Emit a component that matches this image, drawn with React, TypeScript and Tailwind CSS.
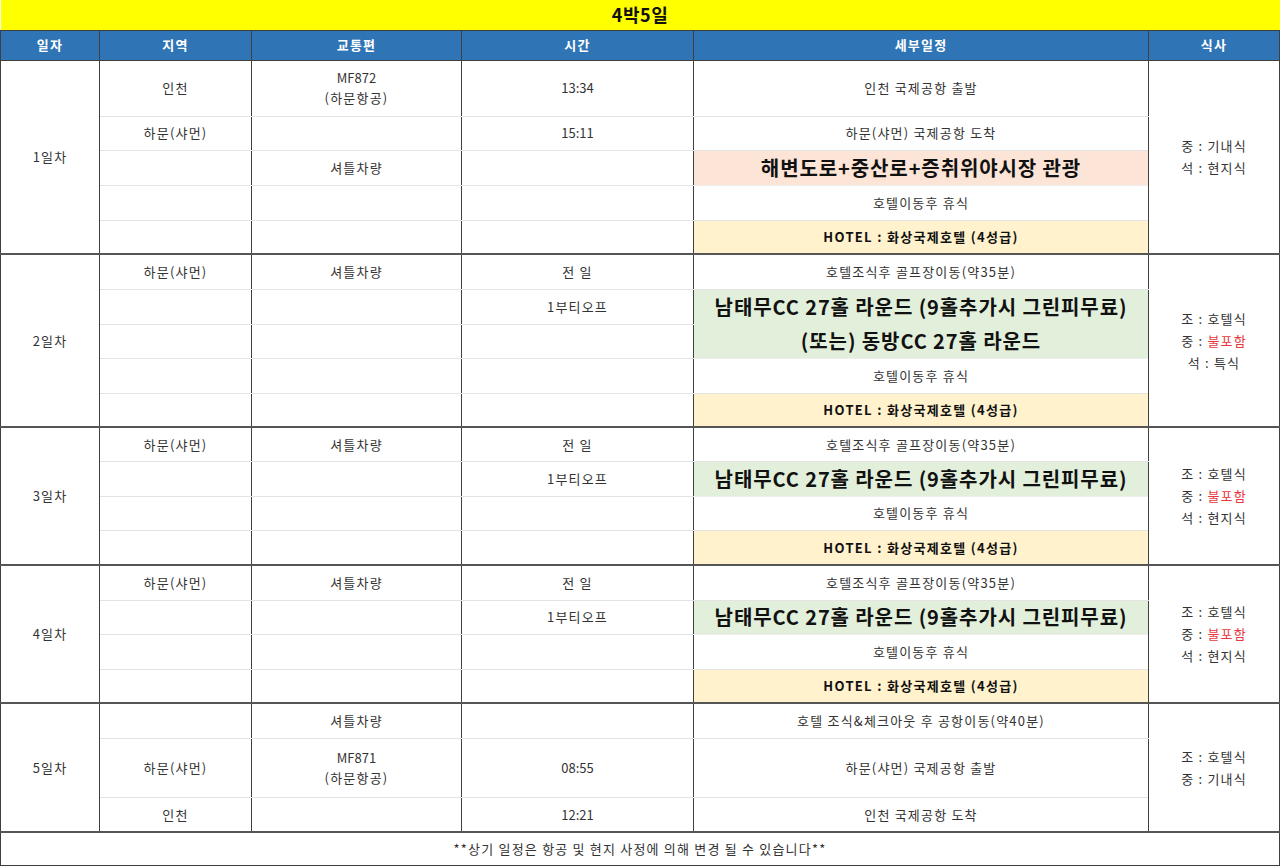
import type { ReactNode } from 'react'

type Tone = 'plain' | 'salmon' | 'green' | 'hotel'

type Row = {
  h: number
  region?: string
  transport?: ReactNode
  time?: string
  detail?: ReactNode
  tone?: Tone
  big?: boolean
  joinNext?: boolean
}

type Day = {
  label: string
  meals: [string, string][]
  rows: Row[]
}

const flight = (no: string) => (
  <div className="leading-[20px]">
    <span className="tracking-normal">{no}</span>
    <br />
    (하문항공)
  </div>
)

const hotel: Row = { h: 34, detail: 'HOTEL : 화상국제호텔 (4성급)', tone: 'hotel' }
const rest: Row = { h: 35, detail: '호텔이동후 휴식' }
const golf = '남태무CC 27홀 라운드 (9홀추가시 그린피무료)'

const days: Day[] = [
  {
    label: '1일차',
    meals: [['중', '기내식'], ['석', '현지식']],
    rows: [
      { h: 56, region: '인천', transport: flight('MF872'), time: '13:34', detail: '인천 국제공항 출발' },
      { h: 34, region: '하문(샤먼)', time: '15:11', detail: '하문(샤먼) 국제공항 도착' },
      { h: 35, transport: '셔틀차량', detail: '해변도로+중산로+증취위야시장 관광', tone: 'salmon', big: true },
      rest,
      hotel,
    ],
  },
  {
    label: '2일차',
    meals: [['조', '호텔식'], ['중', '불포함'], ['석', '특식']],
    rows: [
      { h: 35, region: '하문(샤먼)', transport: '셔틀차량', time: '전 일', detail: '호텔조식후 골프장이동(약35분)' },
      { h: 35, time: '1부티오프', detail: golf, tone: 'green', big: true, joinNext: true },
      { h: 34, detail: '(또는) 동방CC 27홀 라운드', tone: 'green', big: true },
      rest,
      hotel,
    ],
  },
  {
    label: '3일차',
    meals: [['조', '호텔식'], ['중', '불포함'], ['석', '현지식']],
    rows: [
      { h: 34, region: '하문(샤먼)', transport: '셔틀차량', time: '전 일', detail: '호텔조식후 골프장이동(약35분)' },
      { h: 35, time: '1부티오프', detail: golf, tone: 'green', big: true },
      { h: 34, detail: '호텔이동후 휴식' },
      { h: 35, detail: 'HOTEL : 화상국제호텔 (4성급)', tone: 'hotel' },
    ],
  },
  {
    label: '4일차',
    meals: [['조', '호텔식'], ['중', '불포함'], ['석', '현지식']],
    rows: [
      { h: 35, region: '하문(샤먼)', transport: '셔틀차량', time: '전 일', detail: '호텔조식후 골프장이동(약35분)' },
      { h: 34, time: '1부티오프', detail: golf, tone: 'green', big: true },
      { h: 35, detail: '호텔이동후 휴식' },
      { h: 34, detail: 'HOTEL : 화상국제호텔 (4성급)', tone: 'hotel' },
    ],
  },
  {
    label: '5일차',
    meals: [['조', '호텔식'], ['중', '기내식']],
    rows: [
      { h: 35, transport: '셔틀차량', detail: '호텔 조식&체크아웃 후 공항이동(약40분)' },
      { h: 59, region: '하문(샤먼)', transport: flight('MF871'), time: '08:55', detail: '하문(샤먼) 국제공항 출발' },
      { h: 35, region: '인천', time: '12:21', detail: '인천 국제공항 도착' },
    ],
  },
]

const toneBg: Record<Tone, string> = {
  plain: 'bg-white',
  salmon: 'bg-[#fce4d6]',
  green: 'bg-[#e2efda]',
  hotel: 'bg-[#fff2cc]',
}

const cell = 'border-x border-x-[#3f3f3f] text-center align-middle p-0'

function DayBlock({ day }: { day: Day }) {
  return (
    <>
      {day.rows.map((r, i) => {
        const last = i === day.rows.length - 1
        const line = last ? 'border-b-2 border-b-[#555]' : 'border-b border-b-[#e3e3e3]'
        const tone = r.tone ?? 'plain'
        return (
          <tr key={i} style={{ height: r.h }}>
            {i === 0 && (
              <td rowSpan={day.rows.length} className={`${cell} border-b-2 border-b-[#555]`}>
                {day.label}
              </td>
            )}
            <td className={`${cell} ${line}`}>{r.region}</td>
            <td className={`${cell} ${line}`}>{r.transport}</td>
            <td className={`${cell} ${line} ${/\d:\d/.test(r.time ?? '') ? 'tracking-normal' : ''}`}>{r.time}</td>
            <td
              className={`${cell} ${toneBg[tone]} ${
                r.joinNext ? 'border-b-0' : tone !== 'plain' && !last ? 'border-b border-b-[#eeeeee]' : line
              } ${r.big ? 'text-[20px] font-bold text-[#111] tracking-[0.9px]' : ''} ${
                tone === 'hotel' ? 'font-bold text-[#111] tracking-[1.3px]' : ''
              }`}
            >
              {r.detail}
            </td>
            {i === 0 && (
              <td rowSpan={day.rows.length} className={`${cell} border-b-2 border-b-[#555] leading-[22px]`}>
                {day.meals.map(([k, v]) => (
                  <div key={k}>
                    {k} : <span className={v === '불포함' ? 'text-[#e8383d]' : ''}>{v}</span>
                  </div>
                ))}
              </td>
            )}
          </tr>
        )
      })}
    </>
  )
}

export default function App() {
  return (
    <div className="w-[1280px] h-[868px] bg-white font-['Noto_Sans_CJK_KR',sans-serif] text-[13px] text-[#333] tracking-[1.2px]">
      <table className="w-[1279px] table-fixed border-collapse">
        <colgroup>
          <col className="w-[99px]" />
          <col className="w-[152px]" />
          <col className="w-[210px]" />
          <col className="w-[232px]" />
          <col className="w-[455px]" />
          <col className="w-[131px]" />
        </colgroup>
        <thead>
          <tr className="h-[30px]">
            <th colSpan={6} className="bg-[#ffff00] border-b border-b-[#3f3f3f] text-[18px] font-bold text-[#111] tracking-[0.5px] p-0">
              4박5일
            </th>
          </tr>
          <tr className="h-[30px] bg-[#2f75b5] text-white">
            {['일자', '지역', '교통편', '시간', '세부일정', '식사'].map((h) => (
              <th key={h} className="border border-[#3f3f3f] font-bold text-[13px] p-0">
                {h}
              </th>
            ))}
          </tr>
        </thead>
        <tbody>
          {days.map((d) => (
            <DayBlock key={d.label} day={d} />
          ))}
          <tr className="h-[33px]">
            <td colSpan={6} className="border-x border-x-[#3f3f3f] border-b border-b-[#3f3f3f] text-center p-0">
              **상기 일정은 항공 및 현지 사정에 의해 변경 될 수 있습니다**
            </td>
          </tr>
        </tbody>
      </table>
    </div>
  )
}
